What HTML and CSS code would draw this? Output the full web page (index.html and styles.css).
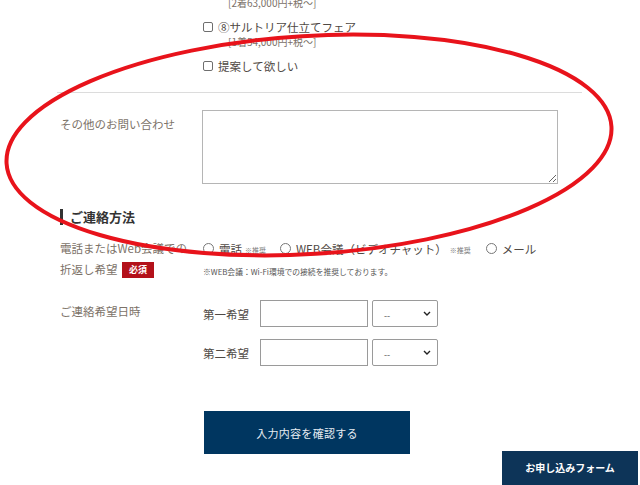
FILE: index.html
```
<!DOCTYPE html>
<html lang="ja">
<head>
<meta charset="utf-8">
<link rel="stylesheet" href="styles.css">
</head>
<body>
<div class="page">
  <div class="row row-options">
    <div class="label"></div>
    <div class="field options">
      <div class="price">[2着63,000円+税～]</div>
      <label class="check"><span class="box"></span>⑧サルトリア仕立てフェア</label>
      <div class="price price-sub">[1着54,000円+税～]</div>
      <label class="check check-last"><span class="box"></span>提案して欲しい</label>
    </div>
  </div>
  <div class="divider"></div>
  <div class="row row-other">
    <div class="label">その他のお問い合わせ</div>
    <div class="field"><textarea class="textarea"></textarea></div>
  </div>

  <h2 class="heading">ご連絡方法</h2>

  <div class="row row-contact">
    <div class="label">電話またはWeb会議での<br>折返し希望 <span class="badge">必須</span></div>
    <div class="field">
      <div class="radios">
        <label class="radio"><span class="circle"></span>電話<span class="small">※推奨</span></label>
        <label class="radio"><span class="circle"></span>WEB会議（ビデオチャット）<span class="small">※推奨</span></label>
        <label class="radio"><span class="circle"></span>メール</label>
      </div>
      <p class="note">※WEB会議：Wi-Fi環境での接続を推奨しております。</p>
    </div>
  </div>

  <div class="row row-date">
    <div class="label">ご連絡希望日時</div>
    <div class="field dates">
      <div class="date-line">
        <span class="date-label">第一希望</span>
        <span class="input"></span>
        <span class="select">--<svg class="chev" viewBox="0 0 8 5" width="8" height="5"><path d="M1 1 L4 4 L7 1" fill="none" stroke="#222" stroke-width="1.4"/></svg></span>
      </div>
      <div class="date-line">
        <span class="date-label">第二希望</span>
        <span class="input"></span>
        <span class="select">--<svg class="chev" viewBox="0 0 8 5" width="8" height="5"><path d="M1 1 L4 4 L7 1" fill="none" stroke="#222" stroke-width="1.4"/></svg></span>
      </div>
    </div>
  </div>

  <div class="submit-wrap">
    <button class="submit">入力内容を確認する</button>
  </div>
</div>

<a class="float-btn">お申し込みフォーム</a>

<svg class="annotation" width="640" height="485" viewBox="0 0 640 485">
  <ellipse cx="309" cy="145" rx="303" ry="109" fill="none" stroke="#e8131b" stroke-width="4" transform="rotate(-3.5 309 145)"/>
</svg>
</body>
</html>
```
FILE: styles.css
```
* { box-sizing: border-box; }
html, body { margin: 0; padding: 0; background: #fff; }
body {
  width: 640px;
  height: 485px;
  overflow: hidden;
  position: relative;
  font-family: "Noto Sans CJK JP", "Noto Sans", sans-serif;
  color: #4a4541;
}
.page {
  margin-top: -4px;
  padding-left: 57px;
  width: 582px;
}
.row {
  display: flex;
}
.label {
  width: 145px;
  flex: none;
  padding-left: 3px;
  font-size: 11.5px;
  color: #7c7268;
  line-height: 21px;
}
.field { flex: 1; }

.price {
  font-size: 10px;
  color: #7a7068;
  padding-left: 26px;
  line-height: 14px;
  height: 14px;
}
.price-sub {
  line-height: 13px;
  height: 13px;
}
.check {
  display: flex;
  align-items: center;
  font-size: 11.5px;
  color: #4f4944;
  line-height: 16px;
  height: 16px;
  margin-top: 9px;
}
.check-last { margin-top: 10px; }
.box {
  width: 10px;
  height: 10px;
  border: 1px solid #6e6e6e;
  border-radius: 2px;
  margin: 0 5px 0 1px;
  background: #fff;
}
.divider {
  margin-top: 18px;
  height: 1px;
  background: #dcdcdc;
  width: 525px;
}
.row-other { padding-top: 17px; }
.row-other .label { padding-top: 4px; }
.textarea {
  display: block;
  width: 356px;
  height: 74px;
  border: 1px solid #b5b5b5;
  border-radius: 0;
  resize: both;
  margin: 0;
  padding: 0;
  background: #fff;
}
.heading {
  margin: 25px 0 0 3px;
  padding-left: 7px;
  border-left: 3px solid #333;
  font-size: 13px;
  line-height: 16px;
  font-weight: bold;
  color: #333;
}
.row-contact { margin-top: 13px; }
.row-contact .label { line-height: 21px; }
.badge {
  display: inline-block;
  background: #b3111a;
  color: #fff;
  font-size: 9px;
  font-weight: bold;
  line-height: 16px;
  padding: 0 7px;
  margin-left: 2px;
  vertical-align: 1px;
}
.radios {
  display: flex;
  align-items: center;
  height: 21px;
  font-size: 11.5px;
  color: #4f4944;
}
.radio {
  display: flex;
  align-items: center;
  margin-right: 13px;
}
.radio:nth-child(2) { margin-right: 14px; }
.circle {
  width: 11px;
  height: 11px;
  border: 1px solid #777;
  border-radius: 50%;
  margin: 0 5px 0 1px;
}
.small {
  font-size: 7px;
  color: #777;
  margin-left: 3px;
  margin-top: 3px;
}
.note {
  margin: 7px 0 0 1px;
  font-size: 7.8px;
  color: #555;
  line-height: 12px;
}
.row-date { margin-top: 20px; }
.row-date .label { padding-top: 1px; }
.date-line {
  display: flex;
  align-items: center;
  height: 27px;
  margin-bottom: 12px;
}
.date-label {
  width: 58px;
  padding-left: 1px;
  font-size: 11.5px;
  color: #4f4944;
}
.input {
  width: 108px;
  height: 27px;
  border: 1px solid #9a9a9a;
  background: #fff;
}
.select {
  width: 66px;
  height: 27px;
  margin-left: 4px;
  border: 1px solid #9a9a9a;
  border-radius: 2px;
  display: flex;
  align-items: center;
  justify-content: space-between;
  padding: 3px 6px 0 11px;
  font-size: 9px;
  color: #555;
}
.chev { margin-top: -3px; }
.submit-wrap {
  padding: 33px 0 0 147px;
}
.submit {
  display: block;
  width: 206px;
  height: 43px;
  border: none;
  background: #003660;
  color: #e6ecf2;
  font-family: inherit;
  font-size: 11px;
  letter-spacing: 0.3px;
}
.float-btn {
  position: absolute;
  left: 502px;
  top: 451px;
  width: 136px;
  height: 34px;
  background: #0d3458;
  color: #fff;
  font-size: 10px;
  font-weight: bold;
  display: flex;
  align-items: center;
  justify-content: center;
  padding-bottom: 2px;
}
.annotation {
  position: absolute;
  left: 0;
  top: 0;
  pointer-events: none;
}
```
